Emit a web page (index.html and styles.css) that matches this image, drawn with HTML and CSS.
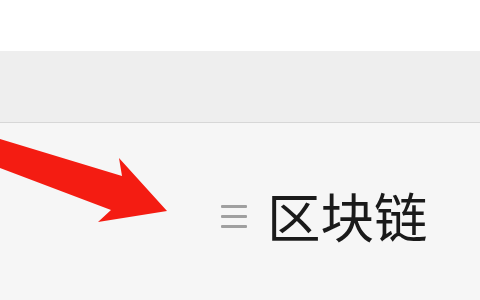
FILE: index.html
```html
<!DOCTYPE html>
<html lang="zh">
<head>
  <meta charset="UTF-8">
  <title>区块链</title>
  <link rel="stylesheet" href="styles.css">
</head>
<body>
  <div class="top"></div>
  <div class="toolbar"></div>
  <div class="content">
    <div class="item">
      <span class="menu"><i></i><i></i><i></i></span>
      <span class="label">区块链</span>
    </div>
    <svg class="arrow" width="180" height="100" viewBox="0 130 180 100">
      <polygon points="0,139 122,176 119,158 167,211 98,222 111,210 0,168" fill="#f41c12"/>
    </svg>
  </div>
</body>
</html>
```

FILE: styles.css
```css
body, html {
  margin: 0;
  padding: 0;
  width: 480px;
  height: 300px;
  overflow: hidden;
  font-family: "Noto Sans CJK SC", "Noto Sans", sans-serif;
}

.top {
  height: 51px;
  background: #ffffff;
}

.toolbar {
  height: 71px;
  background: #eeeeee;
  border-bottom: 1px solid #d7d7d7;
}

.content {
  position: relative;
  height: 177px;
  background: #f6f6f6;
}

.item {
  display: flex;
  align-items: center;
  gap: 20px;
  padding: 62px 0 0 221px;
  height: 60px;
}

.menu {
  display: flex;
  flex-direction: column;
  gap: 7px;
  width: 26px;
  margin-top: 2px;
}

.menu i {
  display: block;
  height: 3px;
  background: #a0a0a0;
  border-radius: 1px;
}

.label {
  font-size: 53.5px;
  line-height: 60px;
  color: #1a1a1a;
  font-weight: 400;
}

/* flecha roja encima */
.arrow {
  position: absolute;
  top: 7px;
  left: 0;
}
```
